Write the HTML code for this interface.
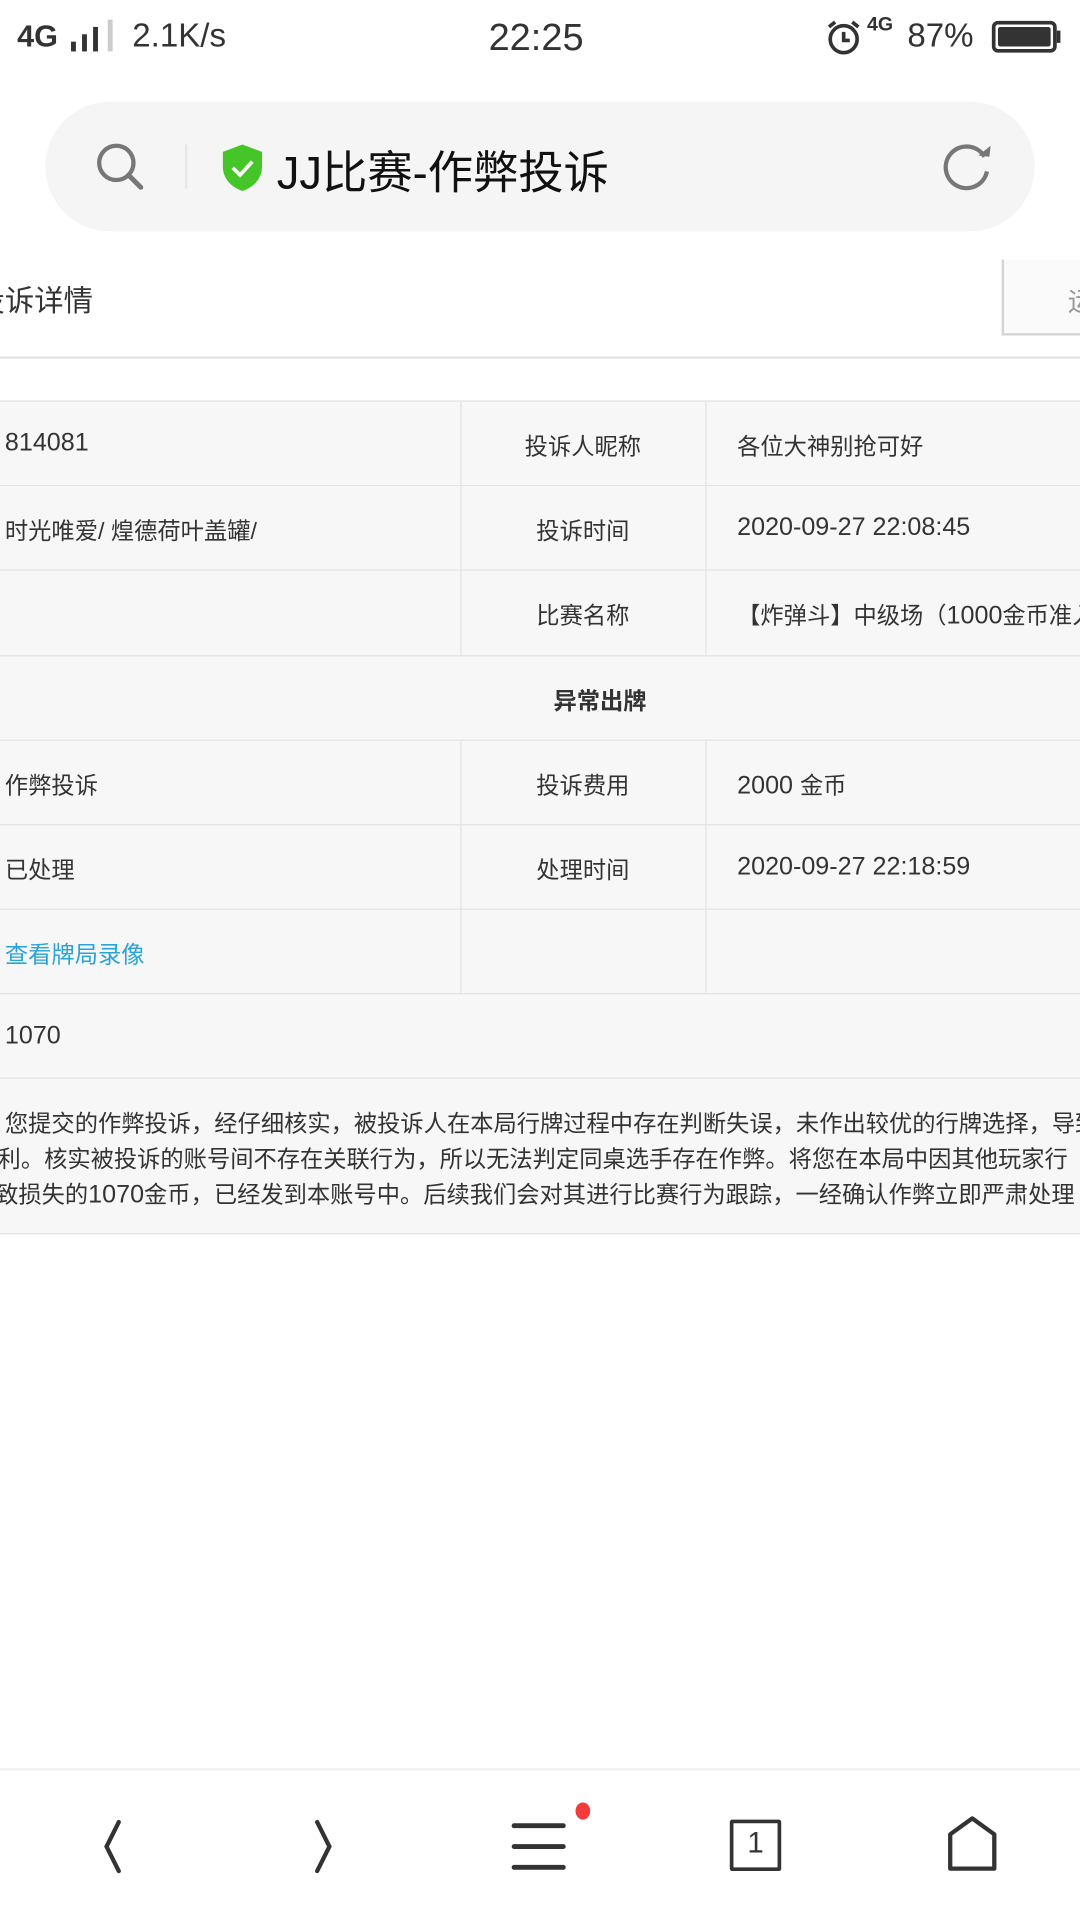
<!DOCTYPE html>
<html><head><meta charset="utf-8"><style>
*{margin:0;padding:0;box-sizing:border-box}
html,body{width:1080px;height:1920px;overflow:hidden;background:#fff}
#w{position:absolute;left:0;top:0;width:882px;height:1568px;transform:scale(1.2245);transform-origin:0 0;font-family:"Liberation Sans","Noto Sans CJK SC",sans-serif;color:#333;overflow:hidden}
.a{position:absolute;white-space:nowrap}
.st{font-size:27px;color:#333;top:14px}
.row{position:absolute;left:0;width:882px;height:69px;border-top:1px solid #e3e3e3;background:#f7f7f7;font-size:19px;color:#333}
.row span{position:absolute;top:22px;white-space:nowrap}
.n{font-size:20.5px;top:22px !important}
.c1{left:4px}.c2{left:376px;width:200px;text-align:center}.c3{left:602px}
.vl{position:absolute;top:0;width:1px;height:69px;background:#e3e3e3}
</style></head><body><div id="w">
<!-- status bar -->
<div class="a st" style="left:14px;top:16px;font-size:25px;font-weight:bold">4G</div>
<div class="a" style="left:58px;top:34px;width:4px;height:8px;background:#333"></div>
<div class="a" style="left:67px;top:28px;width:4px;height:14px;background:#333"></div>
<div class="a" style="left:76px;top:22px;width:4px;height:20px;background:#333"></div>
<div class="a" style="left:88px;top:16px;width:4px;height:26px;background:#ccc"></div>
<div class="a st" style="left:108px">2.1K/s</div>
<div class="a st" style="left:399px;font-size:31px;top:13px">22:25</div>
<svg class="a" style="left:673px;top:14px" width="32" height="32" viewBox="0 0 32 32"><circle cx="16" cy="18" r="11" fill="none" stroke="#333" stroke-width="3"/><path d="M16 12v7h5M4 8l5-4M28 8l-5-4" stroke="#333" stroke-width="3" fill="none"/></svg>
<div class="a" style="left:708px;top:12px;font-size:16px;font-weight:bold">4G</div>
<div class="a st" style="left:741px">87%</div>
<div class="a" style="left:810px;top:17px;width:53px;height:26px;border:3px solid #333;border-radius:5px;padding:2px"><div style="width:100%;height:100%;background:#333;border-radius:2px"></div></div>
<div class="a" style="left:863px;top:25px;width:3px;height:10px;background:#333"></div>
<!-- url bar -->
<div class="a" style="left:37px;top:83px;width:808px;height:106px;border-radius:53px;background:#f5f5f5"></div>
<svg class="a" style="left:77px;top:115px" width="42" height="42" viewBox="0 0 42 42"><circle cx="18" cy="18" r="14" fill="none" stroke="#777" stroke-width="3.5"/><path d="M28 28l10 10" stroke="#777" stroke-width="4" stroke-linecap="round"/></svg>
<div class="a" style="left:151px;top:118px;width:2px;height:36px;background:#e6e6e6"></div>
<svg class="a" style="left:180px;top:117px" width="36" height="40" viewBox="0 0 36 40"><path d="M18 1L34 7v12c0 10-7 17-16 20C9 36 2 29 2 19V7z" fill="#45c527"/><path d="M10 20l6 6 10-11" stroke="#fff" stroke-width="3" fill="none"/></svg>
<div class="a" style="left:226px;top:111px;font-size:37px;color:#111">JJ比赛-作弊投诉</div>
<svg class="a" style="left:768px;top:114px" width="46" height="44" viewBox="0 0 46 44"><path d="M36 14A17 17 0 1 0 38 26" fill="none" stroke="#777" stroke-width="3.5"/><path d="M31 13l9 1 1-9z" fill="#777"/></svg>
<!-- header -->
<div class="a" style="left:0;top:212px;width:882px;height:81px;background:#fff;border-bottom:2px solid #e5e5e5"></div>
<div class="a" style="left:-20px;top:226px;font-size:24px;color:#333">投诉详情</div>
<div class="a" style="left:818px;top:212px;width:80px;height:62px;border:2px solid #d5d5d5;border-top:none;background:#fafafa"></div>
<div class="a" style="left:872px;top:229px;font-size:22px;color:#999">运</div>
<!-- table -->
<div class="row" style="top:327px"><span class="c1 n">814081</span><div class="vl" style="left:376px"></div><span class="c2">投诉人昵称</span><div class="vl" style="left:576px"></div><span class="c3">各位大神别抢可好</span></div>
<div class="row" style="top:396px"><span class="c1">时光唯爱/ 煌德荷叶盖罐/</span><div class="vl" style="left:376px"></div><span class="c2">投诉时间</span><div class="vl" style="left:576px"></div><span class="c3 n">2020-09-27 22:08:45</span></div>
<div class="row" style="top:465px;height:70px"><div class="vl" style="left:376px;height:70px"></div><span class="c2">比赛名称</span><div class="vl" style="left:576px;height:70px"></div><span class="c3">【炸弹斗】中级场（<span style="position:static;font-size:20.5px">1000</span>金币准入</span></div>
<div class="row" style="top:535px"><span style="left:452px;font-weight:bold">异常出牌</span></div>
<div class="row" style="top:604px"><span class="c1">作弊投诉</span><div class="vl" style="left:376px"></div><span class="c2">投诉费用</span><div class="vl" style="left:576px"></div><span class="c3"><span style="position:static;font-size:20.5px">2000 </span>金币</span></div>
<div class="row" style="top:673px"><span class="c1">已处理</span><div class="vl" style="left:376px"></div><span class="c2">处理时间</span><div class="vl" style="left:576px"></div><span class="c3 n">2020-09-27 22:18:59</span></div>
<div class="row" style="top:742px"><span class="c1" style="color:#29a3d8">查看牌局录像</span><div class="vl" style="left:376px"></div><div class="vl" style="left:576px"></div></div>
<div class="row" style="top:811px"><span class="c1 n">1070</span></div>
<div class="row" style="top:880px;height:128px;border-bottom:1px solid #e3e3e3;font-size:19px">
<span style="left:4px;top:22px">您提交的作弊投诉，经仔细核实，被投诉人在本局行牌过程中存在判断失误，未作出较优的行牌选择，导致</span>
<span style="left:-2px;top:51px">利。核实被投诉的账号间不存在关联行为，所以无法判定同桌选手存在作弊。将您在本局中因其他玩家行</span>
<span style="left:-4px;top:80px">致损失的<span style="position:static;font-size:20.5px">1070</span>金币，已经发到本账号中。后续我们会对其进行比赛行为跟踪，一经确认作弊立即严肃处理</span>
</div>
<!-- bottom nav -->
<div class="a" style="left:0;top:1444px;width:882px;height:2px;background:#f2f2f2"></div>
<svg class="a" style="left:70px;top:1485px" width="40" height="46" viewBox="0 0 40 46"><path d="M27 3L17 23l10 20" stroke="#333" stroke-width="3.5" fill="none" stroke-linecap="round"/></svg>
<svg class="a" style="left:246px;top:1485px" width="40" height="46" viewBox="0 0 40 46"><path d="M13 3l10 20-10 20" stroke="#333" stroke-width="3.5" fill="none" stroke-linecap="round"/></svg>
<svg class="a" style="left:416px;top:1484px" width="50" height="46" viewBox="0 0 50 46"><path d="M6 7h42M6 24h42M6 41h42" stroke="#333" stroke-width="4" stroke-linecap="round" transform="translate(-2 0) scale(.96 1)"/></svg>
<div class="a" style="left:470px;top:1472px;width:12px;height:14px;border-radius:50%;background:#f23c3c"></div>
<div class="a" style="left:596px;top:1486px;width:42px;height:42px;border:3.5px solid #333;border-radius:2px;font-size:24px;text-align:center;line-height:34px;color:#333">1</div>
<svg class="a" style="left:770px;top:1482px" width="48" height="48" viewBox="0 0 48 48"><path d="M6 44V16L24 3l18 13v28z" stroke="#333" stroke-width="3.5" fill="none" stroke-linejoin="round"/></svg>
</div></body></html>
